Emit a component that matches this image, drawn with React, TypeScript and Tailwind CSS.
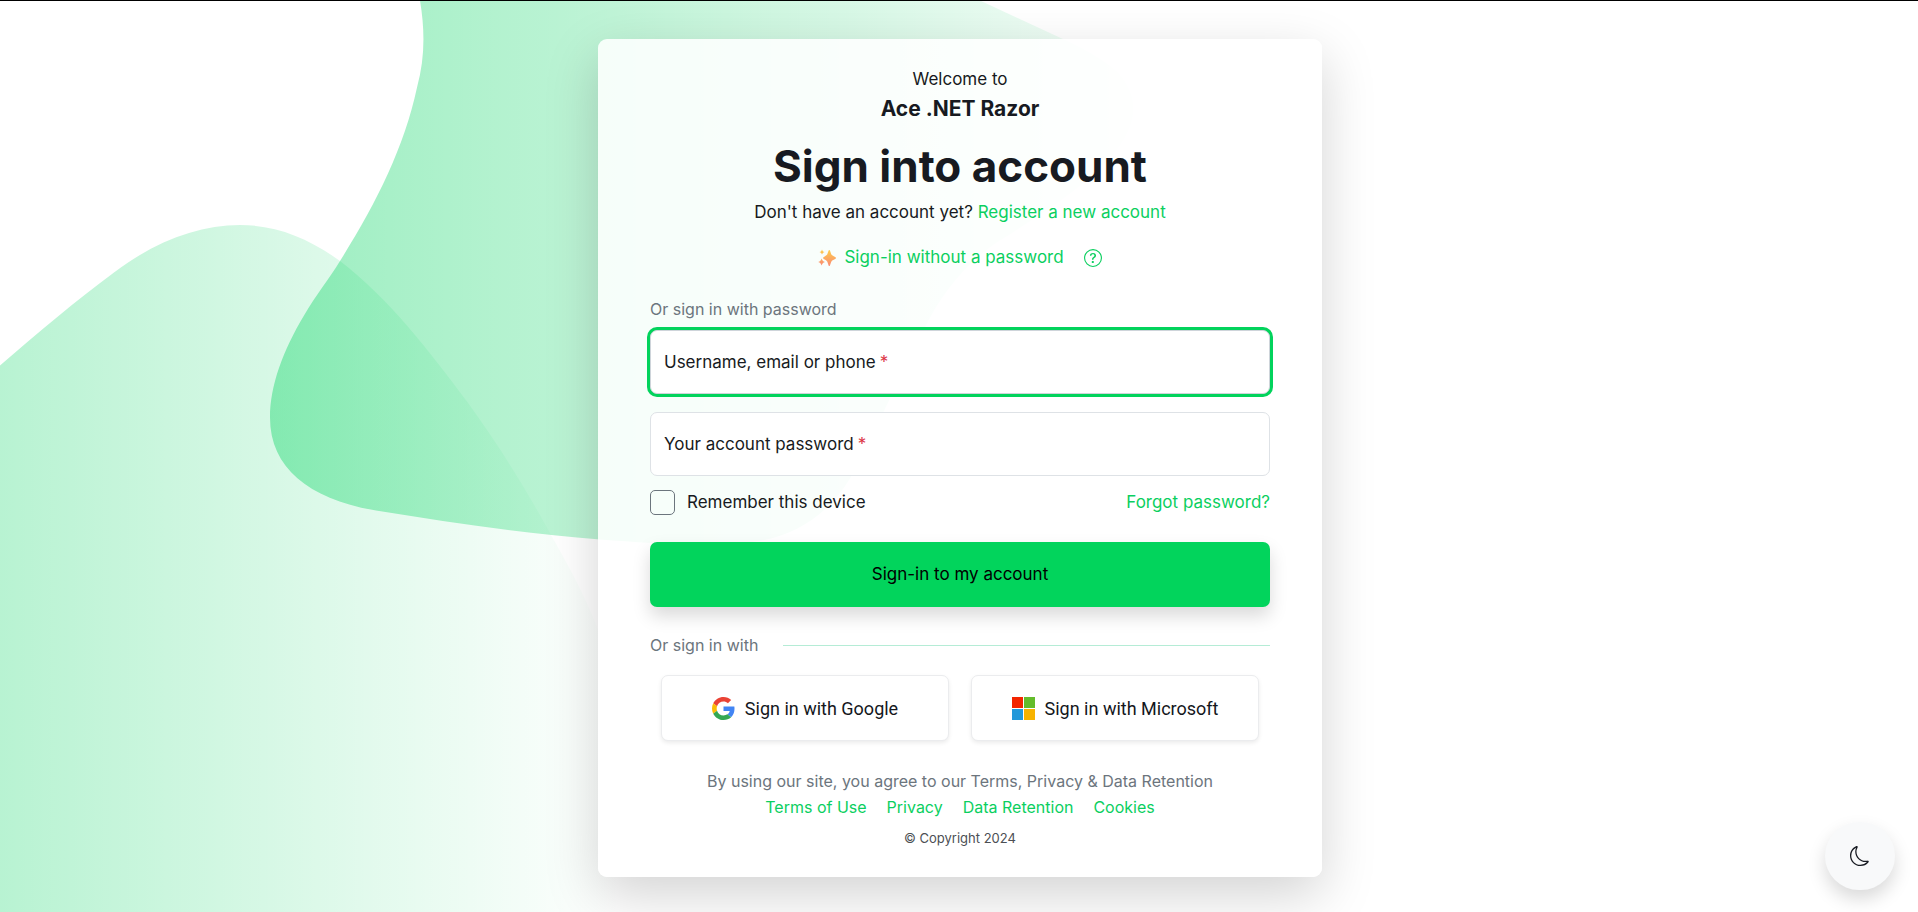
import type { ReactNode } from "react";
import { BsMoon, BsQuestionCircle } from "react-icons/bs";

const linkStyle = "text-[#0bcf5f] hover:underline";

const legalLinks = ["Terms of Use", "Privacy", "Data Retention", "Cookies"];

function Backdrop() {
  return (
    <svg
      aria-hidden="true"
      className="pointer-events-none absolute inset-0 -z-10 h-full w-full"
      viewBox="0 0 1918 912"
      preserveAspectRatio="xMidYMid slice"
    >
      <defs>
        <linearGradient id="wave" gradientUnits="userSpaceOnUse" x1="0" y1="0" x2="620" y2="0">
          <stop offset="0" stopColor="#00d35e" stopOpacity="0.28" />
          <stop offset="1" stopColor="#00d35e" stopOpacity="0" />
        </linearGradient>
        <linearGradient id="blob" gradientUnits="userSpaceOnUse" x1="270" y1="0" x2="1230" y2="0">
          <stop offset="0" stopColor="#00d35e" stopOpacity="0.39" />
          <stop offset="1" stopColor="#00d35e" stopOpacity="0" />
        </linearGradient>
      </defs>
      <path
        fill="url(#wave)"
        d="M0 365C38 332 76 300 114 272C155 241 198 224.500 240 224.500C277 224.500 309 238 340 260.500C388 297 429 350 467 401C499 445 527 490 553 538C575 577 592 608 606 652C636 742 646 830 650 912L0 912Z"
      />
      <path
        fill="url(#blob)"
        d="M420 0C425 30 425 58 417 87C404 148 375 205 340 260.500C329 279 316 294 304 315C283 350 270 385 270 417C270 468 310 499 376 510C450 522 525 533 600 539C655 543 715 548 762 540C800 533 830 511 850 478C872 438 893 390 925 327C940 296 965 262 1000 240C1080 190 1170 130 1118 72C1100 56 1083 48 1064 39L980 0Z"
      />
    </svg>
  );
}

function SparklesIcon() {
  return (
    <svg aria-hidden="true" className="h-[18px] w-[18px]" viewBox="0 0 18 18">
      <defs>
        <linearGradient id="sparkle" x1="0" y1="0" x2="0" y2="1">
          <stop offset="0.1" stopColor="#fdc94f" />
          <stop offset="1" stopColor="#fb8a74" />
        </linearGradient>
      </defs>
      <path
        fill="url(#sparkle)"
        d="M11.300 1C12.300 1 12.700 4.600 13.600 5.800C14.500 7 18 8 18 9C18 10 14.500 11 13.600 12.200C12.700 13.400 12.300 17 11.300 17C10.300 17 9.900 13.400 9 12.200C8.100 11 5 10 5 9C5 8 8.100 7 9 5.800C9.900 4.600 10.300 1 11.300 1ZM4 .4C4.500 1.900 5 2.500 6.500 3C5 3.500 4.500 4.100 4 5.600C3.500 4.100 3 3.500 1.500 3C3 2.500 3.500 1.900 4 .4ZM3.600 9.500C4.300 11.600 5 12.300 7 13C5 13.700 4.300 14.400 3.600 16.500C2.900 14.400 2.200 13.700 .2 13C2.200 12.300 2.900 11.600 3.600 9.500Z"
      />
    </svg>
  );
}

function GoogleLogo() {
  return (
    <svg aria-hidden="true" className="h-[23px] w-[23px]" viewBox="0 0 48 48">
      <path fill="#EA4335" d="M24 9.500c3.540 0 6.710 1.220 9.210 3.600l6.850-6.850C35.900 2.380 30.470 0 24 0 14.620 0 6.510 5.380 2.560 13.220l7.980 6.190C12.430 13.720 17.740 9.500 24 9.500z" />
      <path fill="#4285F4" d="M46.980 24.550c0-1.570-.15-3.090-.38-4.550H24v9.020h12.940c-.58 2.960-2.260 5.480-4.780 7.180l7.730 6c4.510-4.180 7.090-10.360 7.090-17.650z" />
      <path fill="#FBBC05" d="M10.530 28.590c-.48-1.450-.76-2.990-.76-4.590s.27-3.140.76-4.590l-7.980-6.190C.92 16.460 0 20.120 0 24c0 3.880.92 7.540 2.560 10.780l7.970-6.190z" />
      <path fill="#34A853" d="M24 48c6.480 0 11.930-2.130 15.890-5.810l-7.730-6c-2.150 1.450-4.920 2.300-8.160 2.300-6.260 0-11.570-4.220-13.470-9.910l-7.980 6.190C6.510 42.620 14.620 48 24 48z" />
    </svg>
  );
}

function MicrosoftLogo() {
  return (
    <svg aria-hidden="true" className="h-[23px] w-[23px]" viewBox="0 0 23 23" shapeRendering="crispEdges">
      <path fill="#f32500" d="M0 0h11v11H0z" />
      <path fill="#64bc2b" d="M12 0h11v11H12z" />
      <path fill="#2399da" d="M0 12h11v11H0z" />
      <path fill="#f7b300" d="M12 12h11v11H12z" />
    </svg>
  );
}

type FieldProps = { id: string; type: string; label: string; active?: boolean };

function Field({ id, type, label, active = false }: FieldProps) {
  return (
    <div className="relative h-16">
      <input
        id={id}
        type={type}
        required
        placeholder=" "
        className={
          active
            ? "peer h-full w-full rounded-[7px] border border-[#ced4da] bg-white px-3.5 text-[17px] ring-3 ring-[#02d35c] outline-none"
            : "peer h-full w-full rounded-[7px] border border-[#dee2e6] bg-white px-3.5 text-[17px] outline-none focus:ring-3 focus:ring-[#02d35c]"
        }
      />
      <label
        htmlFor={id}
        className="pointer-events-none absolute inset-0 hidden items-center gap-1 px-3.5 text-[17px] peer-placeholder-shown:flex"
      >
        {label} <span className="text-[#dc3545]">*</span>
      </label>
    </div>
  );
}

function SocialButton({ logo, children }: { logo: ReactNode; children: ReactNode }) {
  return (
    <button
      type="button"
      className="flex h-[66px] flex-1 items-center justify-center gap-2.5 rounded-[7px] border border-[#ebecee] bg-white font-['Roboto',sans-serif] text-[18px] text-[#14171c] shadow-[0_2px_4px_rgba(0,0,0,0.08)]"
    >
      {logo}
      {children}
    </button>
  );
}

export default function App() {
  return (
    <main className="relative isolate flex min-h-screen items-start justify-center overflow-hidden border-t border-black bg-white pt-[38px] pb-[35px] pl-0.5 font-['Inter',sans-serif] text-[17px] leading-[27px] text-[#171a21]">
      <Backdrop />

      <section className="w-full max-w-[724px] rounded-[9px] bg-white/86 px-[52px] py-[27px] shadow-[0_18px_54px_rgba(0,0,0,0.175)]">
        <header className="text-center">
          <p>Welcome to</p>
          <p className="text-[21px] leading-8 font-bold">Ace .NET Razor</p>
          <h1 className="mt-3.5 text-[44px] leading-[54px] font-bold">Sign into account</h1>
          <p className="mt-1.5">
            Don't have an account yet?{" "}
            <a href="#register" className={linkStyle}>Register a new account</a>
          </p>
          <div className="mt-[18px] flex items-center justify-center gap-5">
            <a href="#passwordless" className="flex items-center gap-2 text-[#0bcf5f] hover:underline">
              <SparklesIcon />
              Sign-in without a password
            </a>
            <button type="button" aria-label="Help" className="text-[#0bcf5f]">
              <BsQuestionCircle size={18} />
            </button>
          </div>
        </header>

        <form className="mt-[26px]" onSubmit={(event) => event.preventDefault()}>
          <p className="text-base leading-6 text-[#6c757d]">Or sign in with password</p>
          <div className="mt-[9px] flex flex-col gap-[18px]">
            <Field id="username" type="text" label="Username, email or phone" active />
            <Field id="password" type="password" label="Your account password" />
          </div>
          <div className="mt-[13px] flex items-center justify-between">
            <div className="flex items-center gap-3">
              <input
                id="remember"
                type="checkbox"
                className="h-[25px] w-[25px] appearance-none rounded-[5px] border border-[#6c757d] bg-transparent checked:bg-[#02d35c]"
              />
              <label htmlFor="remember">Remember this device</label>
            </div>
            <a href="#forgot" className={linkStyle}>Forgot password?</a>
          </div>
          <button
            type="submit"
            className="mt-[26px] h-[65px] w-full rounded-[7px] bg-[#02d45c] text-black shadow-[0_9px_18px_rgba(0,0,0,0.15)]"
          >
            Sign-in to my account
          </button>
        </form>

        <div className="mt-[26px] flex items-center gap-[25px] text-base leading-6 text-[#6c757d]">
          <span>Or sign in with</span>
          <span className="h-px flex-1 bg-[#b5ecd6]" />
        </div>
        <div className="mt-[18px] flex gap-[22px] px-[11px]">
          <SocialButton logo={<GoogleLogo />}>Sign in with Google</SocialButton>
          <SocialButton logo={<MicrosoftLogo />}>Sign in with Microsoft</SocialButton>
        </div>

        <footer className="mt-[27px] text-center text-base leading-[26px] text-[#6c757d]">
          <p>By using our site, you agree to our Terms, Privacy &amp; Data Retention</p>
          <nav className="flex justify-center gap-5">
            {legalLinks.map((name) => (
              <a key={name} href="#legal" className={linkStyle}>{name}</a>
            ))}
          </nav>
          <p className="mt-1.5 text-[13px] leading-6 text-[#4c4f54]">© Copyright 2024</p>
        </footer>
      </section>

      <button
        type="button"
        aria-label="Toggle dark mode"
        className="fixed right-[23px] bottom-[22px] flex h-[68px] w-[70px] items-center justify-center rounded-full bg-[#f8f9fa] shadow-[0_9px_18px_rgba(0,0,0,0.15)]"
      >
        <BsMoon size={20} />
      </button>
    </main>
  );
}
